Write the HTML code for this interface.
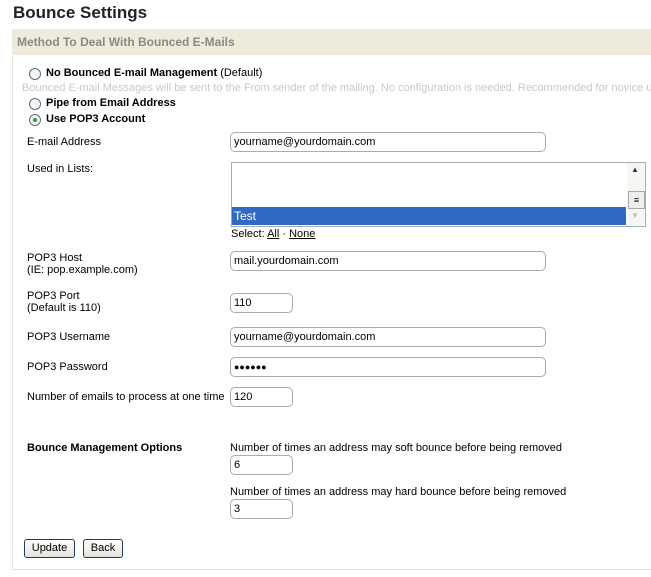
<!DOCTYPE html>
<html><head><style>
body{margin:0;width:651px;height:577px;background:#fff;font-family:"Liberation Sans",Arial,sans-serif;font-size:11px;color:#000;position:relative;overflow:hidden}
.a{position:absolute;white-space:nowrap}
.in{position:absolute;height:18px;border:1px solid #a5acb2;border-radius:5px;background:#fff;font-size:11px;line-height:18px;padding-left:3px;box-sizing:content-box}
.r{position:absolute;width:10px;height:10px;border:1px solid #5a6f8a;border-radius:50%;background:#f4f4f4}
.b{font-weight:bold}
.btn{position:absolute;height:17px;border:1px solid #1c3e6b;border-radius:3px;background:linear-gradient(#fff,#e3e3dc);font-size:11px;line-height:17px;text-align:center}
</style></head><body>
<div class="a b" style="left:13px;top:3px;font-size:17px;color:#222">Bounce Settings</div>
<div style="position:absolute;left:12px;top:29px;width:639px;height:540px;border-left:1px solid #e4e4e4;border-bottom:1px solid #e4e4e4"></div>
<div style="position:absolute;left:12px;top:29px;width:639px;height:26px;background:#eeebdd"></div>
<div class="a b" style="left:17px;top:35px;font-size:12px;color:#8a8a80">Method To Deal With Bounced E-Mails</div>

<div class="r" style="left:29px;top:68px"></div>
<div class="a" style="left:46px;top:67px"><b>No Bounced E-mail Management</b> (Default)</div>
<div class="a" style="left:22px;top:82px;color:#c8c8c8">Bounced E-mail Messages will be sent to the From sender of the mailing. No configuration is needed. Recommended for novice users.</div>
<div class="r" style="left:29px;top:98px"></div>
<div class="a b" style="left:46px;top:97px">Pipe from Email Address</div>
<div class="r" style="left:29px;top:114px"></div>
<div style="position:absolute;left:33px;top:118px;width:4px;height:4px;border-radius:50%;background:#3a9a3a"></div>
<div class="a b" style="left:46px;top:113px">Use POP3 Account</div>

<div class="a" style="left:27px;top:136px">E-mail Address</div>
<div class="in" style="left:230px;top:132px;width:311px">yourname@yourdomain.com</div>
<div class="a" style="left:27px;top:163px">Used in Lists:</div>
<div style="position:absolute;left:231px;top:162px;width:413px;height:63px;border:1px solid #a5acb2;background:#fff"></div>
<div style="position:absolute;left:232px;top:207px;width:394px;height:18px;background:#316ac5;color:#fff;font-size:12px;line-height:18px;padding-left:2px;box-sizing:border-box">Test</div>
<div style="position:absolute;left:627px;top:163px;width:17px;height:62px;background:#f6f6f3"></div>
<div class="a" style="left:631px;top:165px;font-size:8px;color:#333">▲</div>
<div style="position:absolute;left:628px;top:191px;width:15px;height:16px;border:1px solid #aaa;background:#eee;font-size:9px;text-align:center;line-height:16px">≡</div>
<div class="a" style="left:631px;top:211px;font-size:8px;color:#bbb">▼</div>
<div class="a" style="left:231px;top:228px">Select: <u>All</u> · <u>None</u></div>

<div class="a" style="left:27px;top:252px">POP3 Host<br>(IE: pop.example.com)</div>
<div class="in" style="left:230px;top:251px;width:311px">mail.yourdomain.com</div>
<div class="a" style="left:27px;top:290px">POP3 Port<br>(Default is 110)</div>
<div class="in" style="left:230px;top:293px;width:58px">110</div>
<div class="a" style="left:27px;top:331px">POP3 Username</div>
<div class="in" style="left:230px;top:327px;width:311px">yourname@yourdomain.com</div>
<div class="a" style="left:27px;top:361px">POP3 Password</div>
<div class="in" style="left:230px;top:357px;width:311px;font-size:9px">●●●●●●</div>
<div class="a" style="left:27px;top:391px">Number of emails to process at one time</div>
<div class="in" style="left:230px;top:387px;width:58px">120</div>

<div class="a b" style="left:27px;top:442px">Bounce Management Options</div>
<div class="a" style="left:230px;top:442px">Number of times an address may soft bounce before being removed</div>
<div class="in" style="left:230px;top:455px;width:58px">6</div>
<div class="a" style="left:230px;top:486px">Number of times an address may hard bounce before being removed</div>
<div class="in" style="left:230px;top:499px;width:58px">3</div>

<div class="btn" style="left:24px;top:539px;width:49px">Update</div>
<div class="btn" style="left:83px;top:539px;width:38px">Back</div>
</body></html>
